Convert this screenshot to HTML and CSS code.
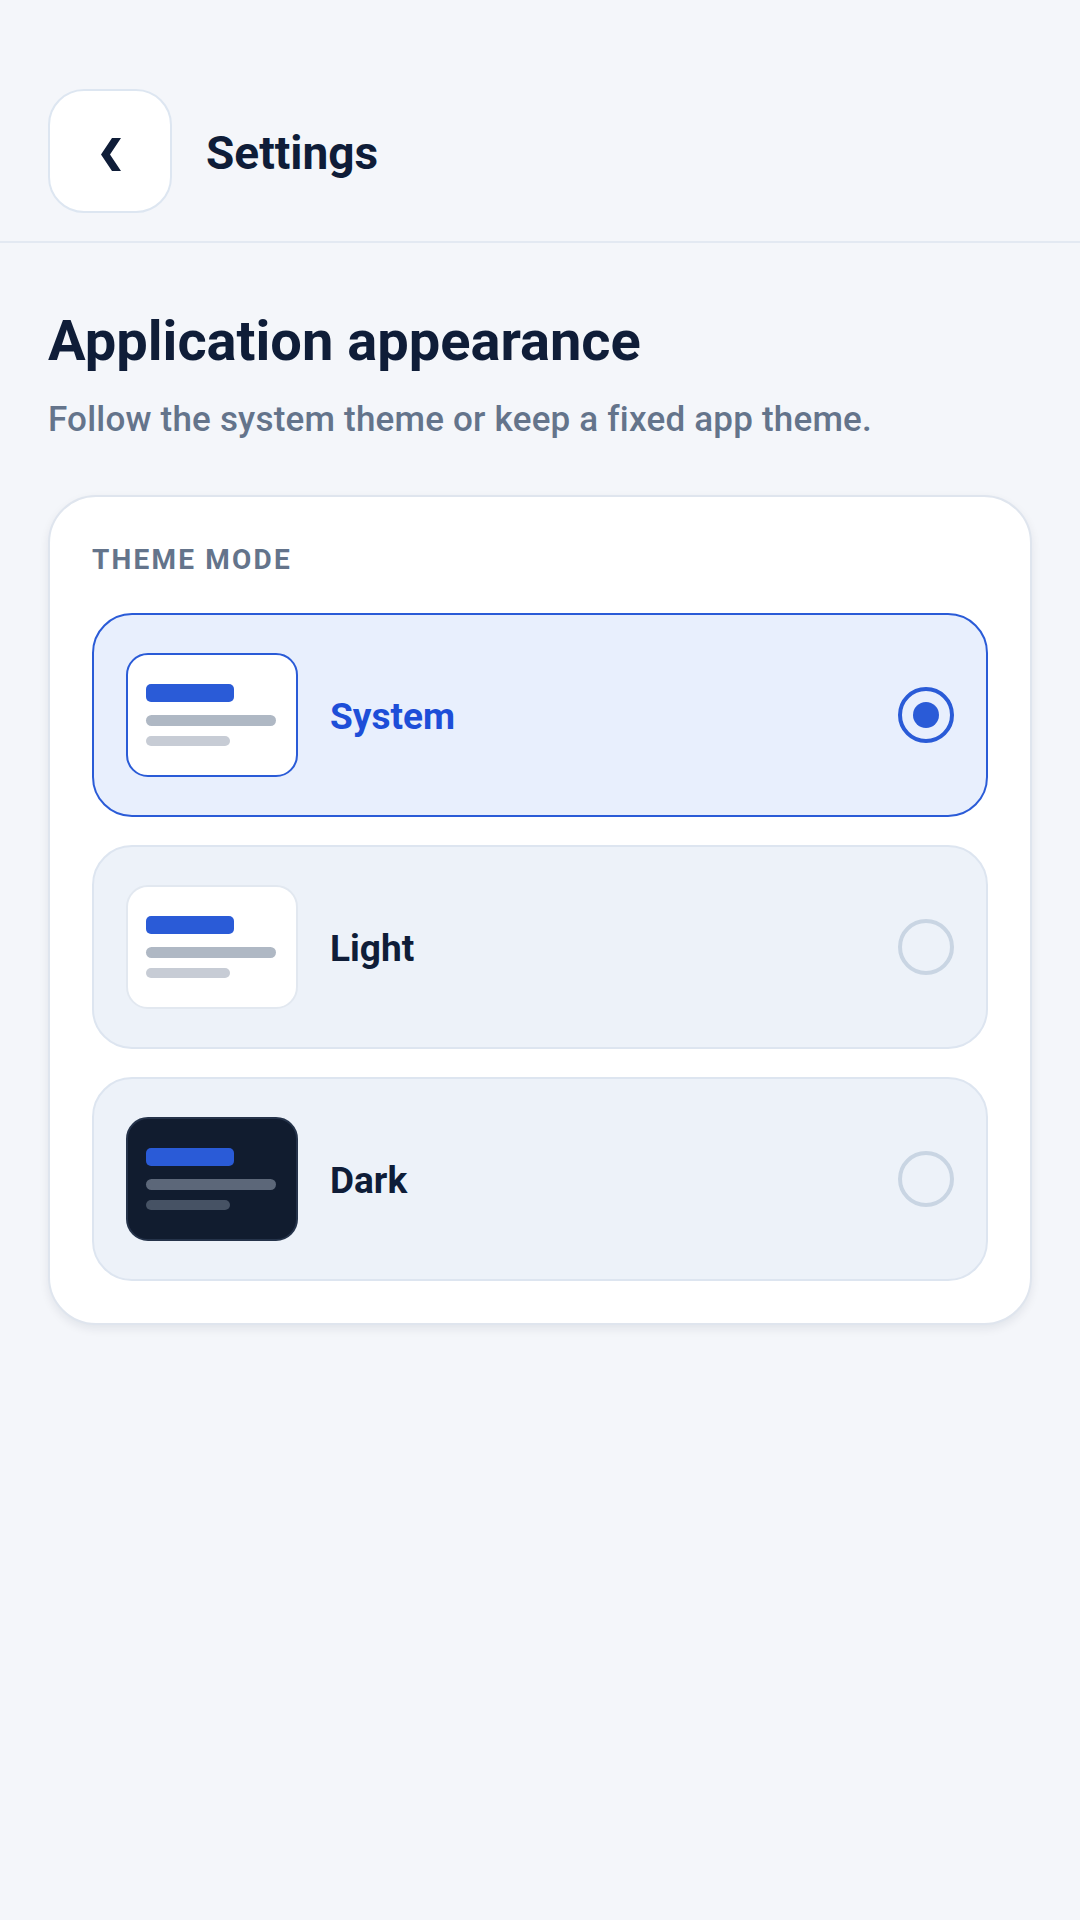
FILE: index.html
```html
<!DOCTYPE html>
<html>

    <head>
        <title>Settings</title>
        <link rel="stylesheet" href="styles.css">
    </head>
    <body>
        <div class="topo">
            <button class="voltar">
                <svg width="40" height="40" viewBox="0 0 40 40">
                    <polygon points="30,3 21,3 10,19.5 21,36 30,36 19,19.5" fill="#0f1d38"/>
                </svg>
            </button>
            <h1>Settings</h1>
        </div>
        <div class="conteudo">
            <h2>Application appearance</h2>
            <p class="descricao">Follow the system theme or keep a fixed app theme.</p>

            <div class="cartao">
                <div class="rotulo">THEME MODE</div>

                <div class="opcao ativa">
                    <div class="miniatura">
                        <span class="barra azul"></span>
                        <span class="barra linha1"></span>
                        <span class="barra linha2"></span>
                    </div>
                    <span class="nome">System</span>
                    <span class="radio"></span>
                </div>

                <div class="opcao">
                    <div class="miniatura">
                        <span class="barra azul"></span>
                        <span class="barra linha1"></span>
                        <span class="barra linha2"></span>
                    </div>
                    <span class="nome">Light</span>
                    <span class="radio"></span>
                </div>

                <div class="opcao">
                    <div class="miniatura escura">
                        <span class="barra azul"></span>
                        <span class="barra linha1"></span>
                        <span class="barra linha2"></span>
                    </div>
                    <span class="nome">Dark</span>
                    <span class="radio"></span>
                </div>
            </div>
        </div>
    </body>
</html>
```

FILE: styles.css
```css
body{
    margin: 0;
    background-color: #f4f6fa;
    font-family: Roboto, "Noto Sans", sans-serif;
    color: #0f1d38;
}
.topo{
    display: flex;
    align-items: center;
    gap: 34px;
    padding: 89px 48px 28px;
    border-bottom: 2px solid #e3e9f2;
}
.voltar{
    width: 124px;
    height: 124px;
    display: flex;
    align-items: center;
    justify-content: center;
    padding: 0 0 0 2px;
    background-color: #ffffff;
    border: 2px solid #dde6f1;
    border-radius: 36px;
}
.voltar svg{
    margin-top: 8px;
}
.topo h1{
    margin: 4px 0 0;
    font-size: 46px;
    font-weight: 700;
}
.conteudo{
    padding: 65px 48px;
}
.conteudo h2{
    margin: 0;
    font-size: 56px;
    line-height: 1.2;
    font-weight: 700;
}
.descricao{
    margin: 22px 0 0;
    font-size: 35px;
    line-height: 1.3;
    font-weight: 500;
    letter-spacing: 0.2px;
    color: #64748b;
}
.cartao{
    margin-top: 52px;
    padding: 46px 42px 42px;
    background-color: #ffffff;
    border: 2px solid #dfe5ee;
    border-radius: 48px;
    box-shadow: 0 4px 10px rgba(15, 29, 56, 0.08);
    display: flex;
    flex-direction: column;
    gap: 28px;
}
.rotulo{
    font-size: 28px;
    line-height: 1.2;
    font-weight: 700;
    letter-spacing: 2.2px;
    color: #64748b;
    margin-bottom: 9px;
}
.opcao{
    display: flex;
    align-items: center;
    gap: 32px;
    padding: 38px 32px;
    background-color: #edf2f9;
    border: 2px solid #dde5f0;
    border-radius: 40px;
}
.opcao.ativa{
    background-color: #e8effd;
    border-color: #2a5bd7;
}
.miniatura{
    width: 172px;
    height: 124px;
    box-sizing: border-box;
    padding: 0 18px;
    display: flex;
    flex-direction: column;
    justify-content: center;
    background-color: #ffffff;
    border: 2px solid #e2e8f0;
    border-radius: 22px;
}
.ativa .miniatura{
    border-color: #2a5bd7;
}
.miniatura.escura{
    background-color: #111c2f;
    border-color: #25334a;
}
.barra{
    display: block;
}
.azul{
    width: 88px;
    height: 18px;
    border-radius: 5px;
    background-color: #2a5bd7;
}
.linha1{
    width: 130px;
    height: 11px;
    margin-top: 13px;
    border-radius: 6px;
    background-color: #afb8c4;
}
.linha2{
    width: 84px;
    height: 10px;
    margin-top: 10px;
    border-radius: 5px;
    background-color: #c7ccd5;
}
.escura .linha1{
    background-color: #5c6779;
}
.escura .linha2{
    background-color: #465264;
}
.nome{
    flex: 1;
    margin-top: 3px;
    font-size: 37px;
    font-weight: 700;
}
.ativa .nome{
    color: #1d4ed8;
}
.radio{
    width: 56px;
    height: 56px;
    box-sizing: border-box;
    border: 4px solid #c9d5e3;
    border-radius: 50%;
    display: flex;
    align-items: center;
    justify-content: center;
}
.ativa .radio{
    border-color: #2a5bd7;
}
.ativa .radio::after{
    content: "";
    width: 26px;
    height: 26px;
    border-radius: 50%;
    background-color: #2a5bd7;
}
```
